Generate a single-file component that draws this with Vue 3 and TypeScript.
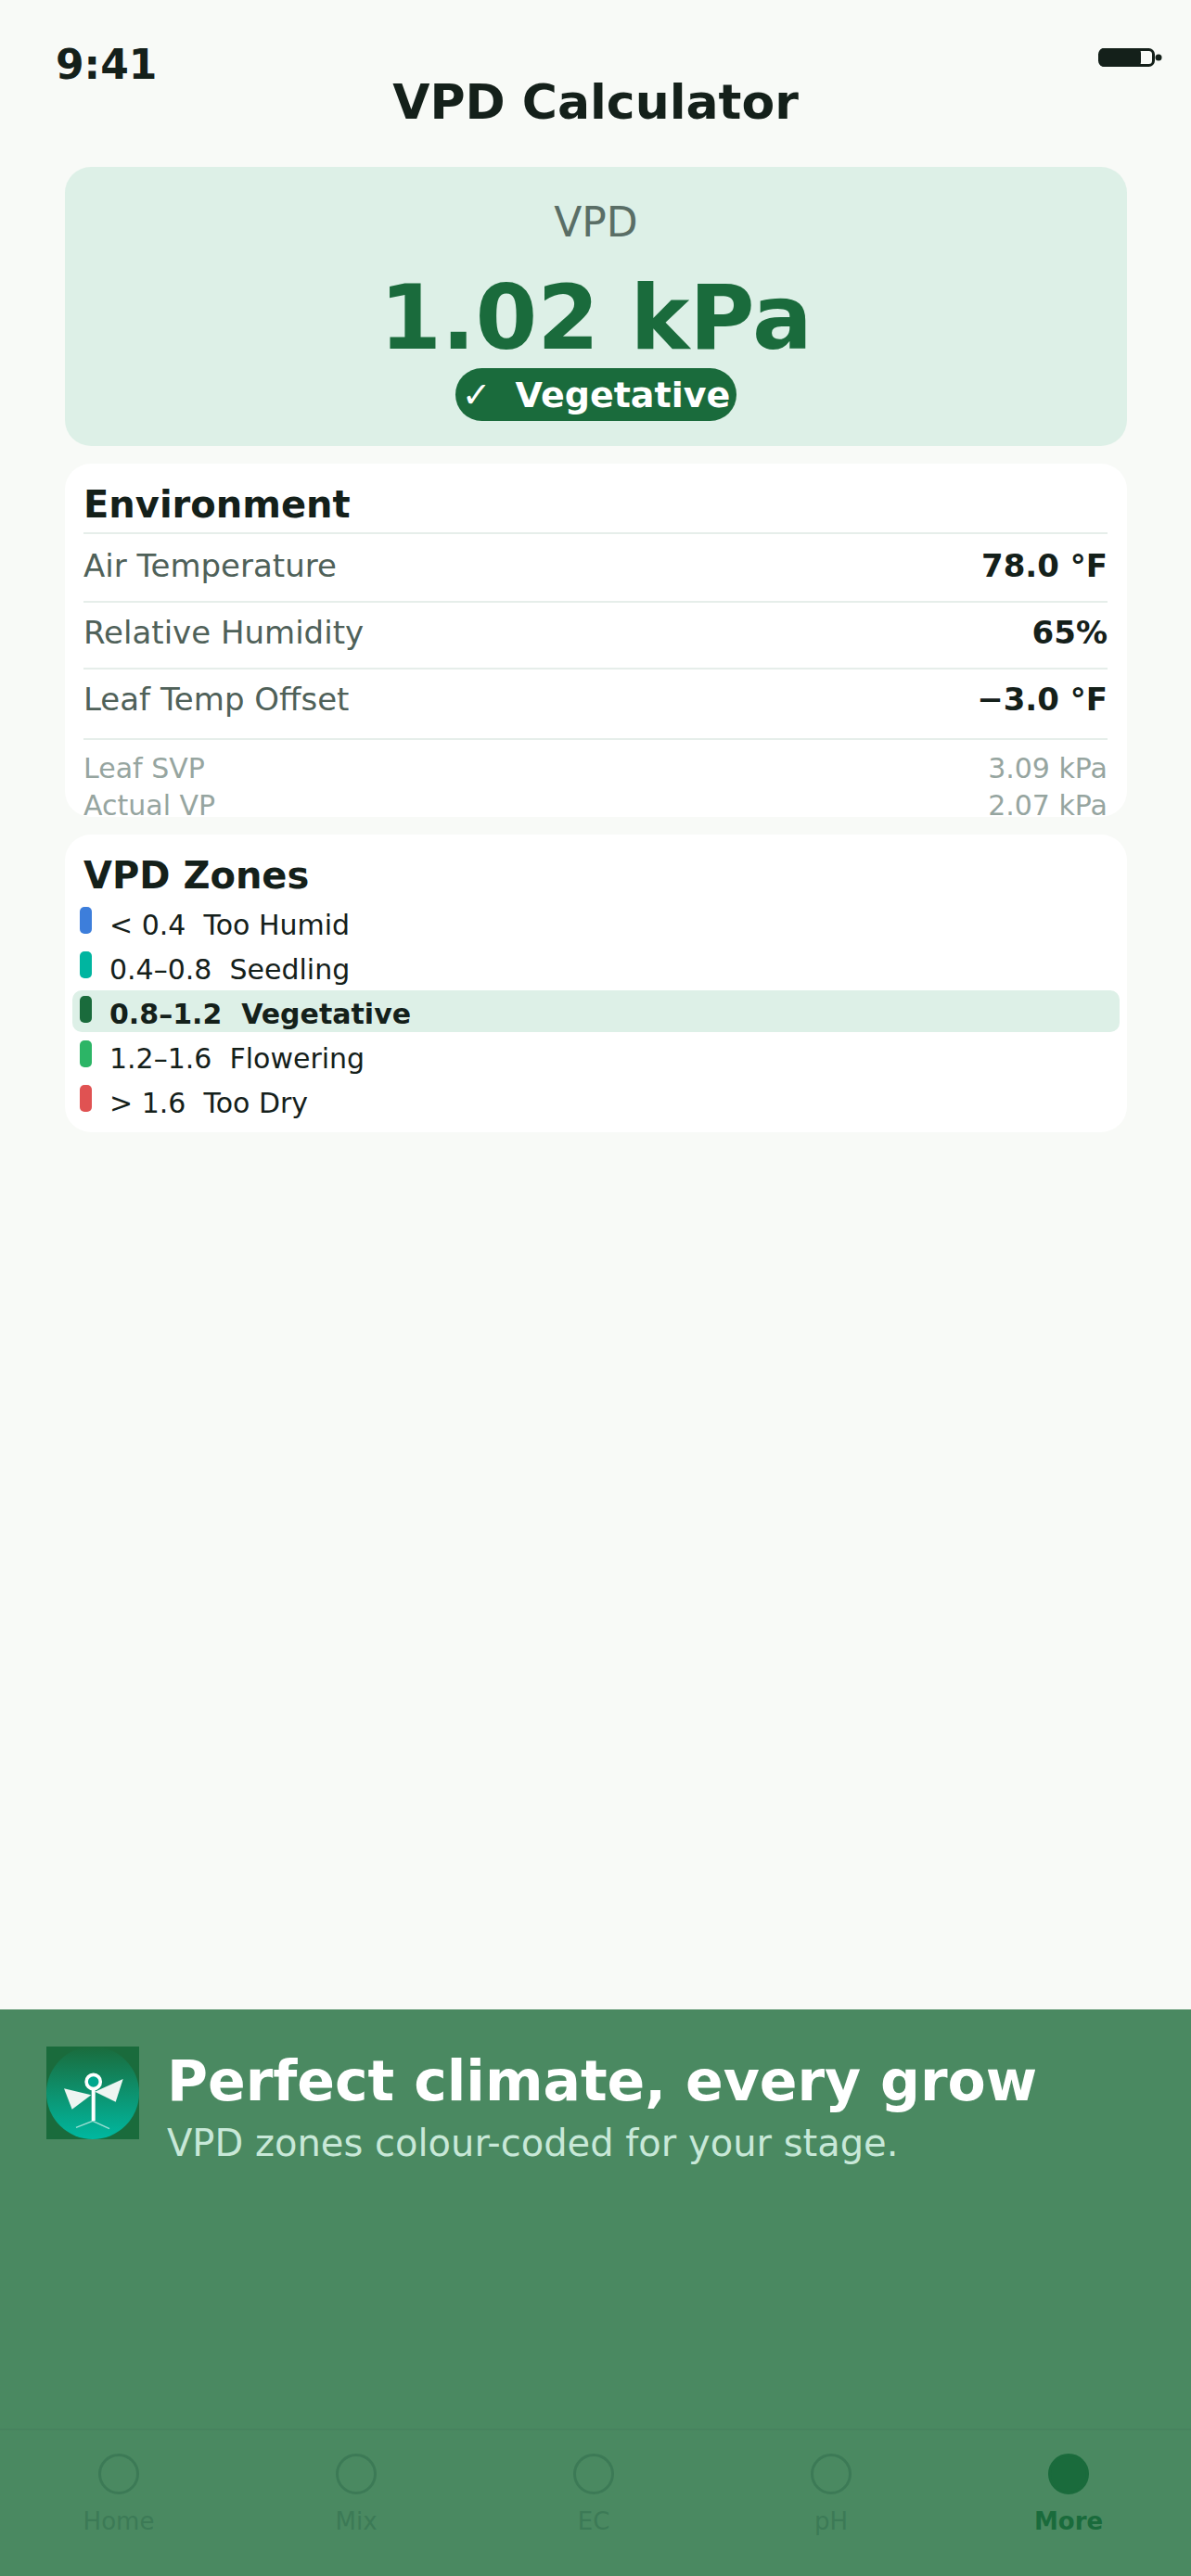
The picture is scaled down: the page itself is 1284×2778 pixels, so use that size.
<script setup lang="ts">
interface Reading {
  label: string;
  value: string;
}

interface Zone {
  text: string;
  color: string;
  active?: boolean;
}

const readings: Reading[] = [
  { label: "Air Temperature", value: "78.0 °F" },
  { label: "Relative Humidity", value: "65%" },
  { label: "Leaf Temp Offset", value: "−3.0 °F" },
];

const derived: Reading[] = [
  { label: "Leaf SVP", value: "3.09 kPa" },
  { label: "Actual VP", value: "2.07 kPa" },
];

const zones: Zone[] = [
  { text: "< 0.4  Too Humid", color: "#3d7edb" },
  { text: "0.4–0.8  Seedling", color: "#00b5a0" },
  { text: "0.8–1.2  Vegetative", color: "#1a6b3c", active: true },
  { text: "1.2–1.6  Flowering", color: "#2cb566" },
  { text: "> 1.6  Too Dry", color: "#e05252" },
];

const tabs = ["Home", "Mix", "EC", "pH", "More"];
const activeTab = "More";
</script>

<template>
  <div class="screen">
    <header class="status">
      <span class="time">9:41</span>
      <svg class="battery" width="70" height="26" viewBox="0 0 70 26">
        <rect x="1.5" y="4.5" width="58" height="17" rx="5" fill="none" stroke="#14201a" stroke-width="3" />
        <rect x="1" y="3" width="45" height="20" rx="5" fill="#14201a" />
        <circle cx="65" cy="13" r="3.5" fill="#14201a" />
      </svg>
    </header>
    <h1 class="title">VPD Calculator</h1>

    <main class="content">
      <section class="hero">
        <div class="hero-label">VPD</div>
        <div class="hero-value">1.02 kPa</div>
        <div class="badge"><span class="check">✓</span><span>Vegetative</span></div>
      </section>

      <section class="card env">
        <h2>Environment</h2>
        <div v-for="row in readings" :key="row.label" class="row">
          <span class="row-label">{{ row.label }}</span>
          <span class="row-value">{{ row.value }}</span>
        </div>
        <div class="derived">
          <div v-for="row in derived" :key="row.label" class="derived-row">
            <span>{{ row.label }}</span>
            <span>{{ row.value }}</span>
          </div>
        </div>
      </section>

      <section class="card zones">
        <h2>VPD Zones</h2>
        <div v-for="zone in zones" :key="zone.text" class="zone" :class="{ active: zone.active }">
          <span class="swatch" :style="{ background: zone.color }"></span>
          <span class="zone-text">{{ zone.text }}</span>
        </div>
      </section>
    </main>

    <footer class="promo">
      <div class="promo-head">
        <svg class="logo" width="100" height="100" viewBox="0 0 100 100">
          <defs>
            <linearGradient id="disc" x1="0" y1="0" x2="0" y2="1">
              <stop offset="0" stop-color="#1a6b3c" />
              <stop offset="1" stop-color="#00b8a0" />
            </linearGradient>
          </defs>
          <rect width="100" height="100" fill="#1a6b3c" />
          <circle cx="50" cy="50" r="50" fill="url(#disc)" />
          <path d="M19 45.3 48.3 52.3 27.7 67.7Z" fill="#eef5f2" />
          <path d="M82.7 35 52.3 48.7 74.7 59.7Z" fill="#eef5f2" />
          <path d="M50.7 47V80" stroke="#fff" stroke-width="4" />
          <circle cx="50.7" cy="38" r="7.6" fill="#00a78e" stroke="#fff" stroke-width="3.6" />
          <path d="M32 87.3 50 80.3 68 88.7" fill="none" stroke="#fff" stroke-opacity=".6" stroke-width="1.4" />
        </svg>
        <div class="promo-copy">
          <div class="promo-title">Perfect climate, every grow</div>
          <div class="promo-sub">VPD zones colour-coded for your stage.</div>
        </div>
      </div>

      <nav class="tabs">
        <div v-for="tab in tabs" :key="tab" class="tab" :class="{ current: tab === activeTab }">
          <span class="dot"></span>
          <span class="tab-label">{{ tab }}</span>
        </div>
      </nav>
    </footer>
  </div>
</template>

<style>
body {
  background: #f8faf7;
}
</style>

<style scoped>
.screen {
  width: 1284px;
  height: 2778px;
  display: flex;
  flex-direction: column;
  background: #f8faf7;
  color: #14201a;
  font-family: "DejaVu Sans", sans-serif;
  overflow: hidden;
}

.status {
  display: flex;
  justify-content: space-between;
  align-items: flex-start;
  height: 84px;
  padding: 46px 30px 0 60px;
  box-sizing: border-box;
}

.time {
  font-size: 44px;
  line-height: 48px;
  font-weight: 700;
}

.battery {
  margin-top: 3px;
}

.title {
  margin: 0;
  font-size: 52px;
  line-height: 52px;
  font-weight: 700;
  text-align: center;
}

.content {
  display: flex;
  flex-direction: column;
  gap: 19px;
  padding: 44px 69px 0 70px;
  flex: 1;
}

.hero {
  height: 301px;
  box-sizing: border-box;
  padding-top: 34px;
  display: flex;
  flex-direction: column;
  align-items: center;
  background: #ddf0e7;
  border-radius: 28px;
}

.hero-label {
  font-size: 44px;
  line-height: 52px;
  color: #5a6e66;
}

.hero-value {
  margin-top: 25px;
  font-size: 96px;
  line-height: 104px;
  font-weight: 700;
  color: #1a6b3c;
}

.badge {
  display: flex;
  align-items: center;
  gap: 26px;
  height: 57px;
  padding: 0 7px;
  margin-top: 2px;
  border-radius: 29px;
  background: #1a6b3c;
  color: #fff;
  font-size: 38px;
  font-weight: 700;
}

.check {
  font-weight: 400;
}

.card {
  background: #fff;
  border-radius: 28px;
  padding: 0 21px 0 20px;
  overflow: hidden;
}

.card h2 {
  margin: 0;
  font-size: 40px;
  line-height: 48px;
  font-weight: 700;
}

.env {
  height: 381px;
  box-sizing: border-box;
  padding-top: 20px;
}

.env h2 {
  height: 54px;
}

.row {
  display: flex;
  justify-content: space-between;
  align-items: flex-start;
  height: 72px;
  padding-top: 12px;
  box-sizing: border-box;
  border-top: 2px solid #e6eeea;
  font-size: 34px;
}

/* first and last reading rows are a little taller than the middle one */
.row:nth-child(2) {
  height: 74px;
  padding-top: 14px;
}

.row:nth-child(4) {
  height: 76px;
}

.row-label {
  color: #4f6159;
}

.row-value {
  font-weight: 700;
}

.derived {
  border-top: 2px solid #e6eeea;
  padding-top: 11px;
}

.derived-row {
  display: flex;
  justify-content: space-between;
  height: 40px;
  line-height: 40px;
  font-size: 30px;
  color: #96a5a0;
}

.zones {
  height: 321px;
  box-sizing: border-box;
  padding: 20px 8px 0;
}

.zones h2 {
  padding-left: 12px;
  height: 52px;
}

.zone {
  display: flex;
  gap: 19px;
  height: 45px;
  margin-bottom: 3px;
  padding: 0 8px;
  border-radius: 10px;
}

.zone.active {
  background: #ddf0e7;
  font-weight: 700;
}

.swatch {
  flex: none;
  width: 13px;
  height: 29px;
  margin-top: 6px;
  border-radius: 5px;
}

.zone-text {
  font-size: 30px;
  line-height: 52px;
  white-space: pre;
}

.promo {
  display: flex;
  flex-direction: column;
  justify-content: space-between;
  height: 611px;
  background: #4a8961;
}

.promo-head {
  display: flex;
  gap: 30px;
  padding: 40px 50px 0;
}

.logo {
  flex: none;
}

.promo-title {
  margin-top: 2px;
  font-size: 60px;
  line-height: 70px;
  font-weight: 700;
  color: #fff;
}

.promo-sub {
  margin-top: 7px;
  font-size: 40px;
  line-height: 50px;
  color: #c8e8d8;
}

.tabs {
  display: grid;
  grid-template-columns: repeat(5, 256px);
  height: 159px;
  box-sizing: border-box;
  padding-top: 25px;
  border-top: 2px solid #47835e;
}

.tab {
  display: flex;
  flex-direction: column;
  align-items: center;
  gap: 11px;
  color: #3c7a56;
}

.dot {
  width: 44px;
  height: 44px;
  box-sizing: border-box;
  border: 3px solid #3c7a56;
  border-radius: 50%;
}

.tab-label {
  font-size: 26px;
  line-height: 36px;
}

.tab.current {
  color: #1a6b3c;
  font-weight: 700;
}

.tab.current .dot {
  background: #1a6b3c;
  border-color: #1a6b3c;
}
</style>
